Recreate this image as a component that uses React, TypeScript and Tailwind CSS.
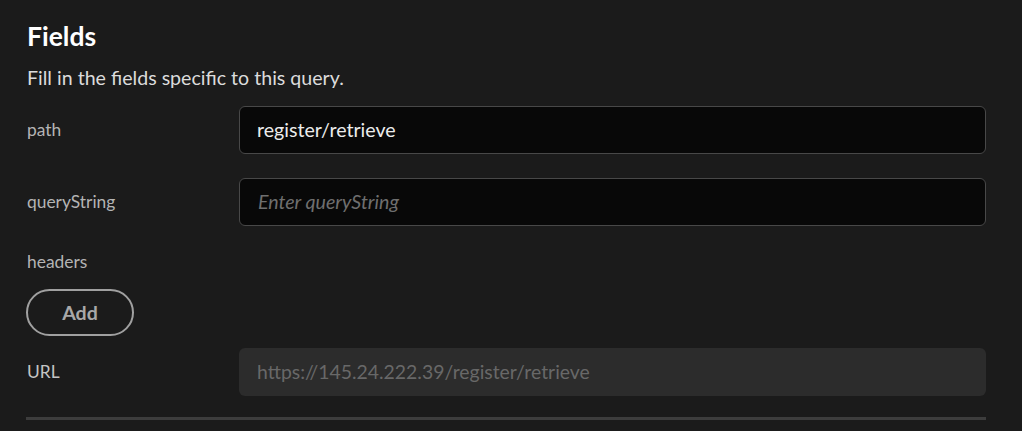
export default function App() {
  const font = { fontFamily: '"Lato", "Noto Sans", sans-serif' };
  return (
    <div className="w-[1022px] h-[431px] bg-[#1b1b1b] overflow-hidden" style={font}>
      <div className="pl-[26px] pr-[36px] pt-[19px]">
        <h2 className="text-[26.5px] leading-[34px] font-bold text-white pl-[1px]">Fields</h2>
        <p className="mt-[12px] text-[19.6px] leading-[26px] text-[#dcdcdc] pl-[1px]">Fill in the fields specific to this query.</p>
        <div className="mt-[15px] flex items-center">
          <div className="w-[213px] pl-[1px] text-[17.4px] text-[#b4b4b4]">path</div>
          <div className="flex-1 h-[48px] rounded-[6px] border border-[#484848] bg-[#080808] flex items-center px-[17px] text-[19.6px] text-[#ececec]">register/retrieve</div>
        </div>
        <div className="mt-[24px] flex items-center">
          <div className="w-[213px] pl-[1px] text-[17.4px] text-[#b4b4b4]">queryString</div>
          <div className="flex-1 h-[48px] rounded-[6px] border border-[#484848] bg-[#080808] flex items-center px-[18px] text-[19.6px] italic text-[#6f6f6f]">Enter queryString</div>
        </div>
        <div className="mt-[24px] pl-[1px] text-[17.4px] leading-[24px] text-[#b4b4b4]">headers</div>
        <button className="mt-[15px] w-[108px] h-[47px] rounded-full border-2 border-[#a0a0a0] text-[19.6px] font-bold text-[#a8a8a8]">Add</button>
        <div className="mt-[12px] flex items-center">
          <div className="w-[213px] pl-[1px] text-[17.4px] text-[#c4c4c4]">URL</div>
          <div className="flex-1 h-[48px] rounded-[6px] bg-[#2c2c2c] flex items-center px-[18px] text-[19.4px] text-[#686868]">https://145.24.222.39/register/retrieve</div>
        </div>
        <div className="mt-[21px] h-[3px] bg-[#3d3d3d]" />
      </div>
    </div>
  );
}
